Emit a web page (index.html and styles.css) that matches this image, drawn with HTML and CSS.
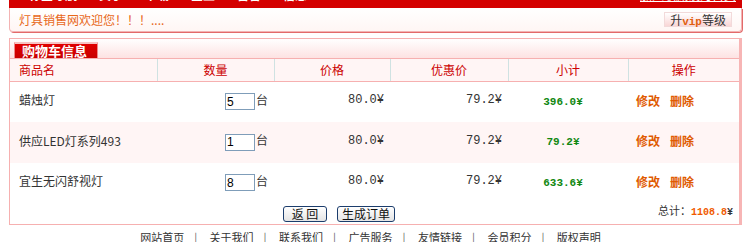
FILE: index.html
```html
<!DOCTYPE html>
<html lang="zh-CN">
<head>
  <meta charset="UTF-8" />
  <title>购物车信息</title>
  <link rel="stylesheet" href="styles.css">
</head>
<body>
  <div class="page">
    <div class="topbar">
      <div class="topnav">
        <span>标签导航</span><span>关于</span><span>下载</span><span>企业</span><span>留言</span><span>信息</span>
        <a class="toplink" href="#">加入收藏设为首页</a>
      </div>
    </div>

    <div class="welcome">
      <span class="welcome-text">灯具销售网欢迎您！！！....</span>
      <button class="vip-btn">升<span class="vip">vip</span>等级</button>
    </div>

    <div class="cart">
      <div class="cart-title">
        <div class="tab">购物车信息</div>
      </div>

      <table class="cart-table">
        <colgroup>
          <col class="w-name" />
          <col class="w-qty" />
          <col class="w-price" />
          <col class="w-disc" />
          <col class="w-sub" />
          <col />
        </colgroup>
        <thead>
          <tr>
            <th class="c-name">商品名</th>
            <th>数量</th>
            <th>价格</th>
            <th>优惠价</th>
            <th>小计</th>
            <th>操作</th>
          </tr>
        </thead>
        <tbody>
          <tr>
            <td class="name">蜡烛灯</td>
            <td class="qty"><input type="text" value="5" />台</td>
            <td class="num">80.0¥</td>
            <td class="num">79.2¥</td>
            <td class="sub">396.0¥</td>
            <td class="op"><a href="#">修改</a><a href="#">删除</a></td>
          </tr>
          <tr class="alt">
            <td class="name">供应LED灯系列493</td>
            <td class="qty"><input type="text" value="1" />台</td>
            <td class="num">80.0¥</td>
            <td class="num">79.2¥</td>
            <td class="sub">79.2¥</td>
            <td class="op"><a href="#">修改</a><a href="#">删除</a></td>
          </tr>
          <tr>
            <td class="name">宜生无闪舒视灯</td>
            <td class="qty"><input type="text" value="8" />台</td>
            <td class="num">80.0¥</td>
            <td class="num">79.2¥</td>
            <td class="sub">633.6¥</td>
            <td class="op"><a href="#">修改</a><a href="#">删除</a></td>
          </tr>
        </tbody>
      </table>

      <div class="cart-foot">
        <div class="actions">
          <button class="btn">返 回</button>
          <button class="btn">生成订单</button>
        </div>
        <div class="total">总计：<b>1108.8</b><span class="yen">¥</span></div>
      </div>
    </div>

    <div class="footer">
      <a href="#">网站首页</a><i>|</i>
      <a href="#">关于我们</a><i>|</i>
      <a href="#">联系我们</a><i>|</i>
      <a href="#">广告服务</a><i>|</i>
      <a href="#">友情链接</a><i>|</i>
      <a href="#">会员积分</a><i>|</i>
      <a href="#">版权声明</a>
    </div>
  </div>
</body>
</html>
```

FILE: styles.css
```css
body {
  margin: 0;
  background: #fff;
  color: #333;
  font-family: "Noto Sans CJK SC", "Liberation Sans", sans-serif;
  font-size: 12px;
  line-height: 14px;
}
.page {
  width: 733px;
  margin-left: 9px;
}
.topbar {
  height: 8px;
  background: #d40000;
  overflow: hidden;
}
.topnav {
  display: flex;
  margin-top: -14px;
  padding-left: 20px;
  color: #fff;
  font-weight: bold;
  font-size: 12px;
  line-height: 18px;
}
.topnav span {
  margin-right: 22px;
}
.topnav .toplink {
  margin-left: auto;
  margin-right: 6px;
  color: #fff;
  font-weight: normal;
  text-decoration: underline;
}
.welcome {
  height: 23px;
  display: flex;
  align-items: center;
  justify-content: space-between;
  padding: 0 9px;
  border: 1px solid #f3b3b3;
  border-top: none;
  border-radius: 0 0 4px 4px;
  background: linear-gradient(#fff, #fff6f4);
  box-shadow: 1px 1px 0 #e26a6a;
}
.welcome-text {
  color: #e8681a;
}
.vip-btn {
  height: 15px;
  padding: 0 5px;
  border: 1px solid #f2dada;
  background: linear-gradient(#fff, #f9d6d6);
  color: #333;
  font-family: inherit;
  font-size: 12px;
  line-height: 13px;
}
.vip {
  color: #e06010;
  font-family: "Liberation Mono", monospace;
  font-weight: bold;
  font-size: 11px;
}
.cart {
  margin-top: 6px;
  border: 1px solid #f6b0b0;
  border-right: 3px solid #f7b5b5;
}
.cart-title {
  height: 19px;
  padding-left: 4px;
  display: flex;
  align-items: flex-end;
  background: linear-gradient(#fff, #fde2e2);
  border-bottom: 1px solid #f6b0b0;
}
.tab {
  width: 80px;
  height: 14px;
  line-height: 14px;
  padding-left: 2px;
  background: linear-gradient(#e00000, #c80000);
  border: 1px solid #e88;
  border-top: 2px solid #f6c3c3;
  border-bottom: none;
  color: #fff;
  font-weight: bold;
  font-size: 13px;
  text-indent: 5px;
}
.cart-table {
  width: 100%;
  table-layout: fixed;
  border-collapse: collapse;
}
.w-name { width: 147px; }
.w-qty { width: 117px; }
.w-price { width: 116px; }
.w-disc { width: 118px; }
.w-sub { width: 120px; }
.cart-table th {
  height: 22px;
  padding: 0;
  background: #fff5f5;
  color: #cc0000;
  font-weight: normal;
  font-size: 12px;
  border-left: 1px solid #cfe2e2;
  border-bottom: 1px solid #f6b0b0;
}
.cart-table th:first-child {
  border-left: none;
}
.cart-table th.c-name {
  text-align: left;
  padding-left: 9px;
}
.cart-table td {
  box-sizing: border-box;
  height: 40px;
  padding: 0;
}
.cart-table tr.alt td {
  height: 41px;
  background: #fff5f5;
}
td.name {
  padding-left: 9px;
  padding-bottom: 3px !important;
  color: #333;
}
td.qty {
  text-align: right;
  padding-right: 6px !important;
}
td.qty input {
  width: 26px;
  height: 13px;
  padding: 1px;
  margin: 0 1px 0 0;
  border: 1px solid #7f9db9;
  font-family: "Liberation Sans", sans-serif;
  font-size: 12px;
  vertical-align: middle;
}
td.num {
  text-align: right;
  padding-right: 6px !important;
  padding-bottom: 3px !important;
  font-family: "Liberation Mono", monospace;
  color: #333;
}
td.sub {
  text-align: center;
  padding-right: 10px !important;
  color: #118811;
  font-family: "Liberation Mono", monospace;
  font-weight: bold;
  font-size: 11px;
}
td.op {
  padding-left: 8px !important;
  padding-bottom: 2px !important;
}
td.op a {
  color: #e05a00;
  font-weight: bold;
  text-decoration: none;
  margin-right: 10px;
}
.cart-foot {
  height: 21px;
  display: flex;
  align-items: flex-start;
}
.actions {
  margin-left: 273px;
  margin-top: 3px;
  display: flex;
  gap: 10px;
}
.btn {
  height: 16px;
  padding: 0 4px;
  border: 1px solid #1c3d6c;
  border-radius: 3px;
  background: linear-gradient(#fff, #e4e4e4);
  color: #111;
  font-family: inherit;
  font-size: 12px;
  line-height: 13px;
}
.btn:first-child {
  width: 44px;
}
.total {
  margin-left: auto;
  margin-right: 6px;
  color: #333;
  font-size: 11px;
}
.total b {
  color: #f05a00;
  font-family: "Liberation Mono", monospace;
  font-size: 10px;
}
.yen {
  font-family: "Liberation Mono", monospace;
  font-weight: bold;
  font-size: 10px;
}
.footer {
  margin-top: 6px;
  padding-right: 10px;
  text-align: center;
  font-size: 11px;
  line-height: 13px;
}
.footer a {
  color: #333;
  text-decoration: none;
}
.footer i {
  font-style: normal;
  color: #666;
  margin: 0 10px;
}
```
